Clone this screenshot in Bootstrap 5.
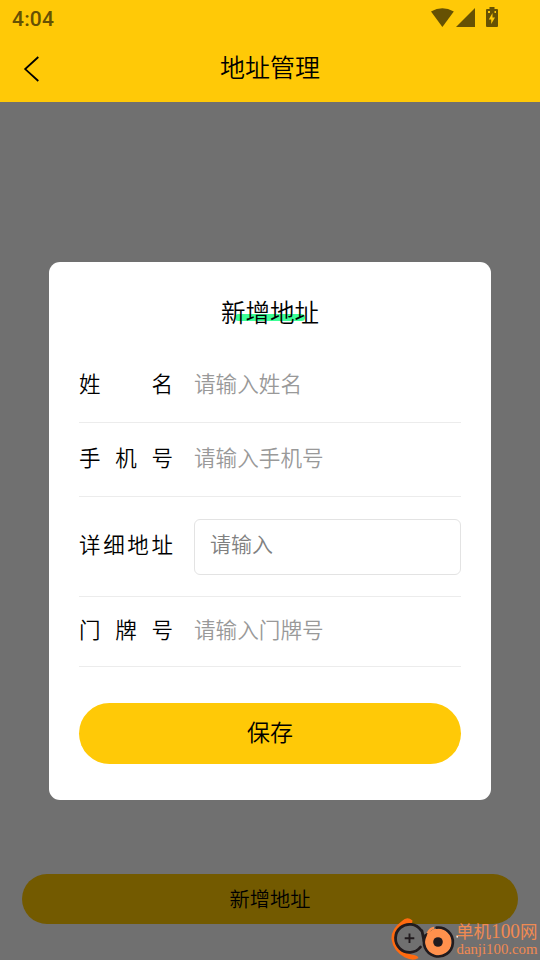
<!DOCTYPE html>
<html lang="zh-CN">
<head>
<meta charset="utf-8">
<meta name="viewport" content="width=device-width, initial-scale=1">
<title>地址管理</title>
<link href="https://cdn.jsdelivr.net/npm/bootstrap@5.3.0/dist/css/bootstrap.min.css" rel="stylesheet">
<style>
body{font-family:"Noto Sans CJK SC DemiLight","Noto Sans CJK SC Light","Noto Sans CJK SC",sans-serif;font-weight:300;background:#707070;color:#000;height:960px;overflow:hidden}
.app-top{height:102px;background:#ffc907}
.status-line{height:36px;padding:0 42px 0 12px;color:#665103}
.clock-text{font:500 21px/36px Roboto,sans-serif;padding-top:1px;letter-spacing:.2px}
.title-line{height:66px;padding-bottom:4px}
.page-title{font-size:25px;line-height:36px;font-weight:300;padding-bottom:2px}
.back-btn{left:22px;top:18px;line-height:0}
.sheet{width:442px;height:538px;margin-top:160px;padding:30px;border-radius:11px}
.sheet-title{font-size:24.5px;line-height:36px;margin-top:2px;font-weight:300;z-index:0}
.sheet-title::before{content:"";position:absolute;z-index:-1;left:14px;right:14px;bottom:9px;height:7px;border-radius:4px;background:#3cff96}
.field{border-bottom:1px solid #ececec;font-size:21.5px}
.field-a{height:93px;padding-top:14px}
.field-b{height:74px;padding-bottom:6px}
.field-c{height:100px}
.field-d{height:70px;padding-bottom:6px}
.field label{width:94px;margin-right:21px;line-height:32px}
.field-c label{padding-bottom:6px}
.field input{font-size:21.6px;line-height:32px;color:#000;font-weight:300}
.field input::placeholder{color:#999;opacity:1}
.field textarea{height:56px;border:1px solid #e3e3e3;border-radius:6px;padding:8px 15px;font-size:21px;line-height:31px;resize:none;font-weight:300}
.field textarea::placeholder{color:#808080;opacity:1}
.save-btn{height:61px;margin-top:36px;background:#ffc907!important;font-size:23px;padding-bottom:11px;font-weight:300}
.add-btn{width:496px;height:50px;margin-top:74px;background:#735a00!important;font-size:20.2px;padding:6px;font-weight:300}
.brand{right:2px;bottom:0;width:149px;height:44px}
</style>
</head>
<body class="d-flex flex-column align-items-center position-relative">
<header class="app-top w-100">
  <div class="status-line d-flex justify-content-between">
    <span class="clock-text">4:04</span>
    <svg width="68" height="22" viewBox="0 0 68 22" fill="currentColor" class="mt-2 flex-shrink-0 overflow-visible" aria-hidden="true">
      <path d="M1 3.600Q12.300-3.300 23.800 3.600L12.400 19z"/>
      <path d="M26 19H45V0z"/>
      <path fill-rule="evenodd" d="M59.500-1H64.500V1H67Q68 1 68 2V18Q68 19 67 19H57Q56 19 56 18V2Q56 1 57 1H59.500zM62.500 5L58.800 11.500H61.200V16L65 9.500H62.500zM58 3V5H60V3zM64.500 3V5H66V3z"/>
    </svg>
  </div>
  <div class="title-line d-flex align-items-center justify-content-center position-relative">
    <a href="#" class="back-btn position-absolute" aria-label="返回"><svg width="20" height="30" viewBox="0 0 20 30" fill="none" stroke="#000" stroke-width="1.800"><path d="M16.300 3L3.200 15.100L16.300 27"/></svg></a>
    <h1 class="page-title m-0">地址管理</h1>
  </div>
</header>
<main class="sheet bg-white d-flex flex-column flex-shrink-0">
  <h2 class="sheet-title position-relative align-self-center mb-0">新增地址</h2>
  <div class="field field-a d-flex align-items-center"><label for="n" class="d-flex justify-content-between flex-shrink-0"><span>姓</span><span>名</span></label><input id="n" class="form-control border-0 p-0 bg-transparent" placeholder="请输入姓名"></div>
  <div class="field field-b d-flex align-items-center"><label for="p" class="d-flex justify-content-between flex-shrink-0"><span>手</span><span>机</span><span>号</span></label><input id="p" class="form-control border-0 p-0 bg-transparent" placeholder="请输入手机号"></div>
  <div class="field field-c d-flex align-items-center"><label for="a" class="d-flex justify-content-between flex-shrink-0"><span>详</span><span>细</span><span>地</span><span>址</span></label><textarea id="a" class="form-control overflow-hidden" placeholder="请输入"></textarea></div>
  <div class="field field-d d-flex align-items-center"><label for="h" class="d-flex justify-content-between flex-shrink-0"><span>门</span><span>牌</span><span>号</span></label><input id="h" class="form-control border-0 p-0 bg-transparent" placeholder="请输入门牌号"></div>
  <button class="save-btn btn rounded-pill border-0 text-black flex-shrink-0">保存</button>
</main>
<button class="add-btn btn rounded-pill border-0 text-black flex-shrink-0">新增地址</button>
<svg class="brand position-absolute" viewBox="389 916 149 44" aria-hidden="true">
  <path d="M412.500 920.500Q407 916 402 921Q391 929 391.500 939Q393 951 405 957.500Q413 961.500 418.500 958Q418 955 411 954.500Q399 951 396 940Q395 929 404 924.500L412 923.500z" fill="#ff6a10"/>
  <circle cx="409.500" cy="938.300" r="14" fill="#707070"/>
  <path d="M421 930.300A14 14 0 1 0 420.500 947" fill="none" stroke="#211b1e" stroke-width="2.800" stroke-linecap="round"/>
  <path d="M404.700 938.300H414.300M409.500 933.500V943.100" stroke="#211b1e" stroke-width="1.900"/>
  <path d="M422 931Q423 936 424 941M425.500 936L430.500 931" fill="none" stroke="#211b1e" stroke-width="2.800" stroke-linecap="round"/>
  <circle cx="438.300" cy="942" r="13.500" fill="#ff914d"/>
  <path d="M436.500 927.600A14.500 14.500 0 1 1 425.500 935.300" fill="none" stroke="#211b1e" stroke-width="2.600" stroke-linecap="round"/>
  <path d="M427.500 933.500Q430.500 928 434 928" fill="none" stroke="#ff914d" stroke-width="2.400"/>
  <circle cx="438" cy="942" r="4.800" fill="#211b1e"/>
  <path d="M456.500 935.500h1.500v2h-1.500z" fill="#fff"/>
  <g fill="#f08a52" font-family="Noto Sans CJK SC, sans-serif" font-weight="400" font-size="17.500">
    <text x="456" y="937.500">单机</text>
    <text x="491" y="937.500" font-family="Liberation Serif, serif" font-size="20" textLength="29" lengthAdjust="spacingAndGlyphs">100</text>
    <text x="520" y="937.500">网</text>
  </g>
  <text x="456.500" y="954" font-family="Liberation Serif, serif" font-size="15" font-weight="400" fill="#f08a52" textLength="81" lengthAdjust="spacingAndGlyphs">danji100.com</text>
</svg>
<script src="https://cdn.jsdelivr.net/npm/bootstrap@5.3.0/dist/js/bootstrap.bundle.min.js"></script>
</body>
</html>
